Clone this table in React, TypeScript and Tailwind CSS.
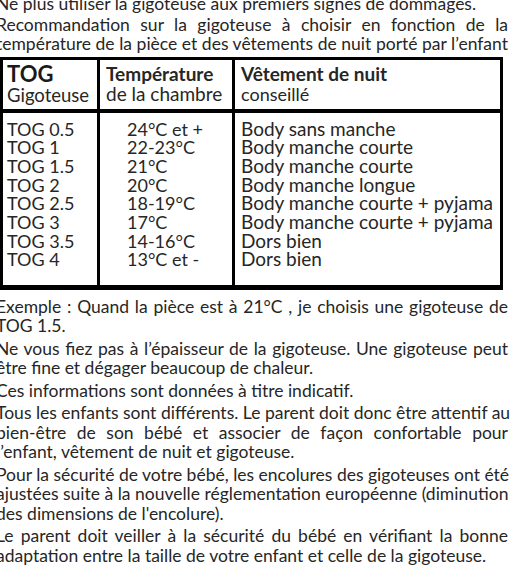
import React from "react";

const rows: [string, string, string][] = [
  ["TOG 0.5", "24°C et +", "Body sans manche"],
  ["TOG 1", "22-23°C", "Body manche courte"],
  ["TOG 1.5", "21°C", "Body manche courte"],
  ["TOG 2", "20°C", "Body manche longue"],
  ["TOG 2.5", "18-19°C", "Body manche courte + pyjama"],
  ["TOG 3", "17°C", "Body manche courte + pyjama"],
  ["TOG 3.5", "14-16°C", "Dors bien"],
  ["TOG 4", "13°C et -", "Dors bien"],
];

function J({ children }: { children: React.ReactNode }) {
  return <div className="text-justify [text-align-last:justify] whitespace-nowrap">{children}</div>;
}
function L({ children }: { children: React.ReactNode }) {
  return <div className="whitespace-nowrap">{children}</div>;
}

export default function App() {
  return (
    <div className="w-[510px] h-[567px] overflow-hidden bg-white text-[#262626] font-['Lato',sans-serif] text-[17.5px] leading-[19.5px]">
      <div className="-mt-[6px] -ml-[4px] w-[512px]">
        <L>Ne plus utiliser la gigoteuse aux premiers signes de dommages.</L>
        <div className="mt-[1px]">
          <J>Recommandation sur la gigoteuse à choisir en fonction de la</J>
          <J>température de la pièce et des vêtements de nuit porté par l’enfant</J>
        </div>
      </div>

      <div className="mt-[3px] w-[503px] border-[3px] border-b-[5px] border-black">
        <div className="flex h-[53px] border-b-[4px] border-black">
          <div className="w-[97px] border-r-[3px] border-black pl-[4px] pt-[2px]">
            <div className="text-[22px] leading-[24px] font-bold text-[#1a1a1a]">TOG</div>
            <div className="text-[18.5px] leading-[19px]">Gigoteuse</div>
          </div>
          <div className="w-[135px] border-r-[3px] border-black pl-[6px] pt-[4px]">
            <div className="text-[19px] leading-[20px] font-bold">Température</div>
            <div className="text-[19px] leading-[20px]">de la chambre</div>
          </div>
          <div className="flex-1 pl-[6px] pt-[4px]">
            <div className="text-[19px] leading-[20px] font-bold">Vêtement de nuit</div>
            <div className="text-[18px] leading-[20px]">conseillé</div>
          </div>
        </div>
        <div className="flex h-[172px] text-[18px] leading-[18.7px]">
          <div className="w-[97px] border-r-[3px] border-black pl-[4px] pt-[7px]">
            {rows.map((r) => (
              <div key={r[0]}>{r[0]}</div>
            ))}
          </div>
          <div className="w-[135px] border-r-[3px] border-black pl-[27px] pt-[7px]">
            {rows.map((r, i) => (
              <div key={i}>{r[1]}</div>
            ))}
          </div>
          <div className="flex-1 pl-[6px] pt-[7px] text-[19px]">
            {rows.map((r, i) => (
              <div key={i} className="whitespace-nowrap">{r[2]}</div>
            ))}
          </div>
        </div>
      </div>

      <div className="-ml-[4px] w-[512px] mt-[7px]">
        <div className="mb-[3px]">
          <J>Exemple : Quand la pièce est à 21°C , je choisis une gigoteuse de</J>
          <L>TOG 1.5.</L>
        </div>
        <div className="mb-[3px]">
          <J>Ne vous fiez pas à l’épaisseur de la gigoteuse. Une gigoteuse peut</J>
          <L>être fine et dégager beaucoup de chaleur.</L>
        </div>
        <div className="mb-[3px]">
          <L>Ces informations sont données à titre indicatif.</L>
        </div>
        <div className="mb-[3px]">
          <J>Tous les enfants sont différents. Le parent doit donc être attentif au</J>
          <J>bien-être de son bébé et associer de façon confortable pour</J>
          <L>l’enfant, vêtement de nuit et gigoteuse.</L>
        </div>
        <div className="mb-[3px]">
          <J>Pour la sécurité de votre bébé, les encolures des gigoteuses ont été</J>
          <J>ajustées suite à la nouvelle réglementation européenne (diminution</J>
          <L>des dimensions de l'encolure).</L>
        </div>
        <div className="mb-[3px]">
          <J>Le parent doit veiller à la sécurité du bébé en vérifiant la bonne</J>
          <L>adaptation entre la taille de votre enfant et celle de la gigoteuse.</L>
        </div>
      </div>
    </div>
  );
}
